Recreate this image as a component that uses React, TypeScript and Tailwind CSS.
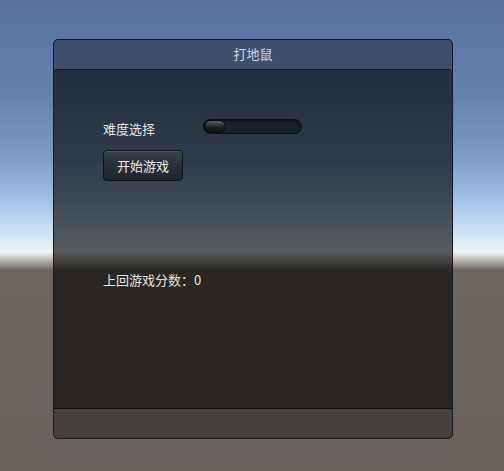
import React, { useState } from 'react';

const App: React.FC = () => {
  const [level] = useState(0);
  const [lastScore] = useState(0);

  return (
    <div
      className="w-full h-[471px] overflow-hidden pt-[39px] pl-[53px] bg-[linear-gradient(to_bottom,#58719e_0px,#6380ad_90px,#7d9cc8_160px,#a8c7ea_205px,#cfe5f6_235px,#eef3f2_252px,#b3b0ab_261px,#6f675f_270px,#6a625c_471px)]"
      style={{ fontFamily: '"Noto Sans CJK SC", "Noto Sans", sans-serif' }}
    >
      {/* window */}
      <div className="w-[400px] h-[400px] flex flex-col rounded-[5px] border border-[#131822] bg-black/35 overflow-hidden">
        <div className="h-[29px] flex items-center justify-center text-[13px] text-[#d4d7dd] pb-[2px]">
          打地鼠
        </div>

        {/* content */}
        <div className="h-[340px] flex flex-col bg-black/42 border-y border-[#0d1016] rounded-t-[4px] pl-[49px] pt-[49px]">
          <div className="flex items-start">
            <div className="w-[100px] pt-[2px] text-[13px] leading-[15px] text-[#e6e6e6]">难度选择</div>
            <div className="relative w-[99px] h-[15px] rounded-full bg-[#1a212c] border border-[#0c1017] shadow-[inset_0_1px_2px_rgba(0,0,0,0.6)]">
              <div
                className="absolute top-0 h-[13px] w-[22px] rounded-full border border-[#050608] bg-[linear-gradient(to_bottom,#5a5c5e_0%,#35373a_35%,#1c1d1f_60%,#121315_100%)]"
                style={{ left: `${level}%` }}
              />
            </div>
          </div>

          <button className="mt-[14px] w-[80px] h-[31px] rounded-[4px] border border-[#0f131a] bg-[linear-gradient(to_bottom,#39404c_0%,#2a303b_45%,#1f242c_100%)] shadow-[inset_0_1px_0_rgba(255,255,255,0.12)] text-[13px] text-[#ececec] flex items-center justify-center">
            开始游戏
          </button>

          <div className="mt-[91px] text-[13px] leading-[16px] text-[#e6e6e6]">上回游戏分数：{lastScore}</div>
        </div>

        <div className="h-[29px]" />
      </div>
    </div>
  );
};

export default App;
